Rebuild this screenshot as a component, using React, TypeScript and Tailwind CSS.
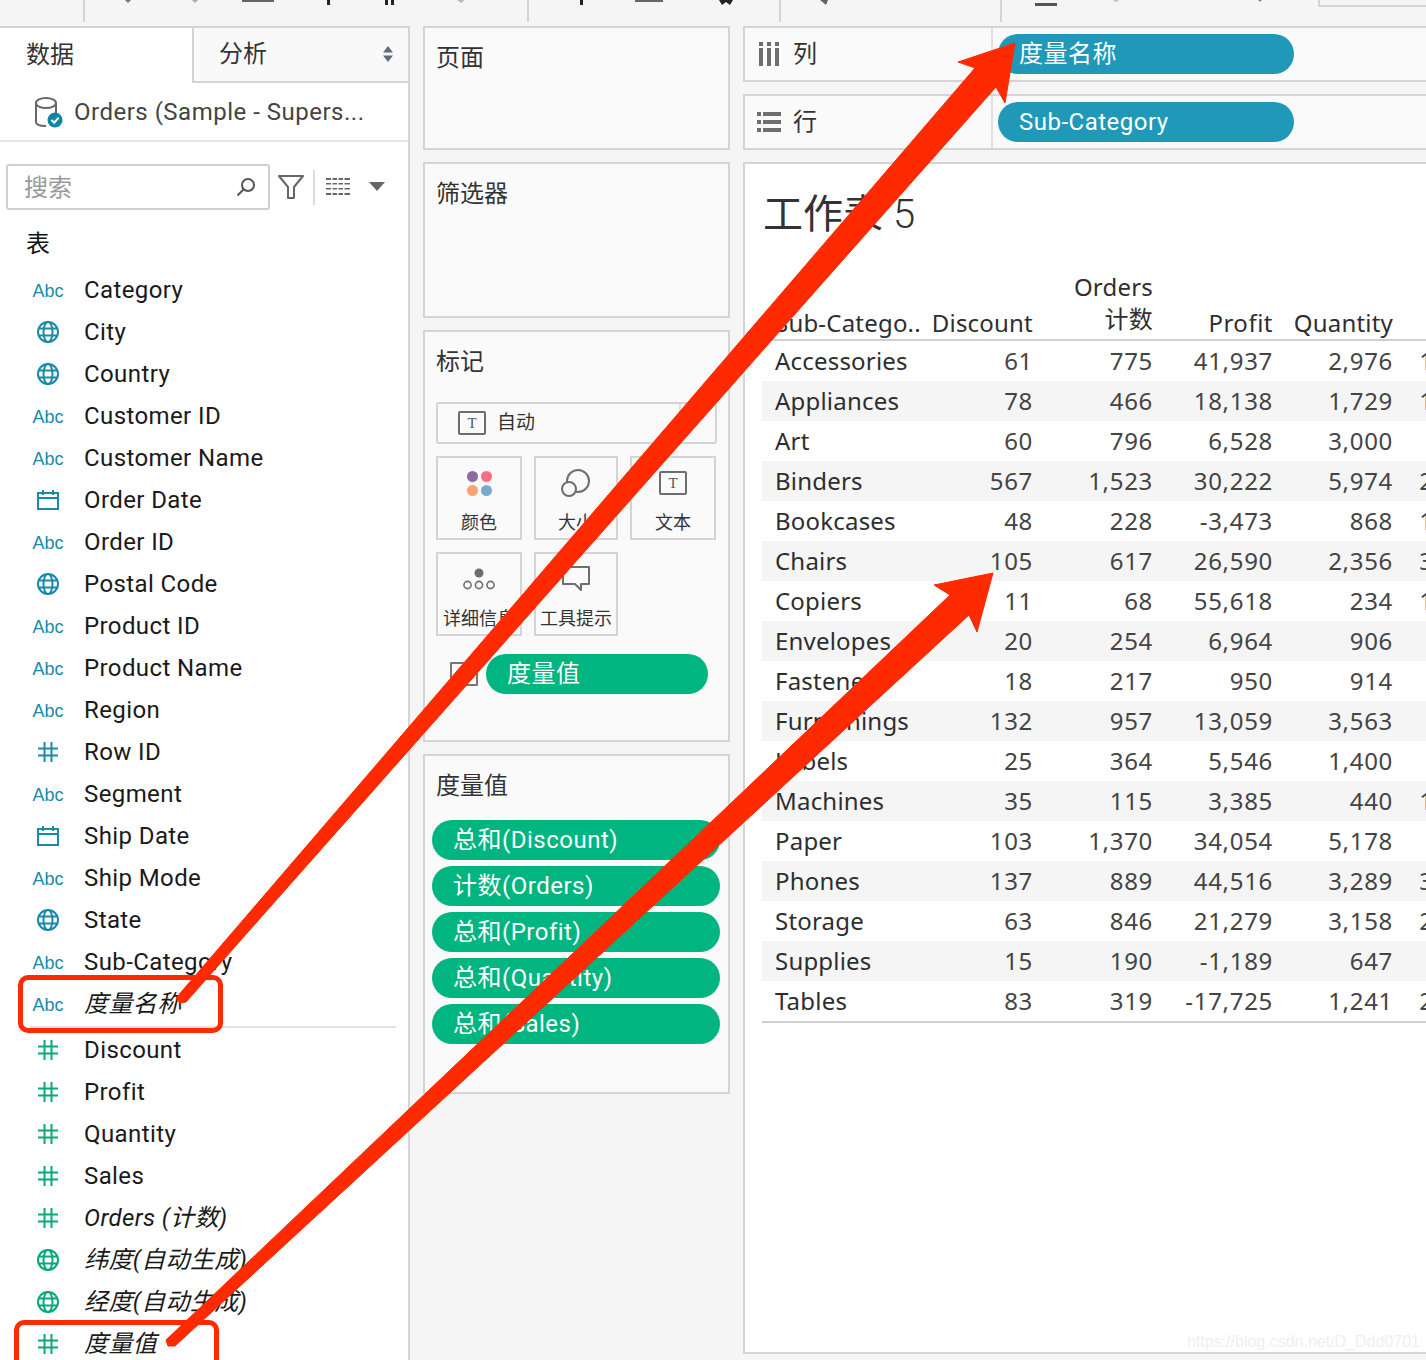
import React from "react";

const BLUE = "#1b89a9";
const GREEN = "#0aa77c";

function Hash({ color }: { color: string }) {
  return (
    <svg width="20" height="20" viewBox="0 0 20 20" fill="none" stroke={color} strokeWidth="2">
      <path d="M6.5 0v20M13.5 0v20M0 6.5h20M0 13.5h20" />
    </svg>
  );
}
function Globe({ color }: { color: string }) {
  return (
    <svg width="22" height="22" viewBox="0 0 22 22" fill="none" stroke={color} strokeWidth="2">
      <circle cx="11" cy="11" r="10" />
      <ellipse cx="11" cy="11" rx="4.5" ry="10" />
      <path d="M1.5 7.5h19M1.5 14.5h19" />
    </svg>
  );
}
function Cal({ color }: { color: string }) {
  return (
    <svg width="22" height="20" viewBox="0 0 22 20" fill="none" stroke={color} strokeWidth="2">
      <rect x="1" y="3" width="20" height="16" />
      <path d="M1 8h20M6 0v5M16 0v5" />
    </svg>
  );
}
type F = { n: string; t: "a" | "g" | "c" | "h"; i?: boolean; c?: string };
function FieldRow({ f, h }: { f: F; h: string }) {
  const c = f.c ?? BLUE;
  return (
    <div className={`flex items-center ${h}`}>
      <div className="w-[32px] ml-[32px] flex justify-center shrink-0">
        {f.t === "a" && <span className="mt-[3px] text-[18px] [font-family:'Liberation_Sans',sans-serif]" style={{ color: c }}>Abc</span>}
        {f.t === "g" && <Globe color={c} />}
        {f.t === "c" && <Cal color={c} />}
        {f.t === "h" && <Hash color={c} />}
      </div>
      <span className={`ml-[20px] text-[24px] tracking-[0.4px] text-[#1a1a1a] whitespace-nowrap ${f.i ? "italic" : ""}`}>{f.n}</span>
    </div>
  );
}

const dims: F[] = [
  { n: "Category", t: "a" }, { n: "City", t: "g" }, { n: "Country", t: "g" }, { n: "Customer ID", t: "a" },
  { n: "Customer Name", t: "a" }, { n: "Order Date", t: "c" }, { n: "Order ID", t: "a" }, { n: "Postal Code", t: "g" },
  { n: "Product ID", t: "a" }, { n: "Product Name", t: "a" }, { n: "Region", t: "a" }, { n: "Row ID", t: "h" },
  { n: "Segment", t: "a" }, { n: "Ship Date", t: "c" }, { n: "Ship Mode", t: "a" }, { n: "State", t: "g" },
  { n: "Sub-Category", t: "a" }, { n: "度量名称", t: "a", i: true },
];
const meas: F[] = [
  { n: "Discount", t: "h", c: GREEN }, { n: "Profit", t: "h", c: GREEN }, { n: "Quantity", t: "h", c: GREEN },
  { n: "Sales", t: "h", c: GREEN }, { n: "Orders (计数)", t: "h", c: GREEN, i: true },
  { n: "纬度(自动生成)", t: "g", c: GREEN, i: true }, { n: "经度(自动生成)", t: "g", c: GREEN, i: true },
  { n: "度量值", t: "h", c: GREEN, i: true },
];

const rows = [
  ["Accessories", "61", "775", "41,937", "2,976", "167,380"],
  ["Appliances", "78", "466", "18,138", "1,729", "107,532"],
  ["Art", "60", "796", "6,528", "3,000", "27,119"],
  ["Binders", "567", "1,523", "30,222", "5,974", "203,413"],
  ["Bookcases", "48", "228", "-3,473", "868", "114,880"],
  ["Chairs", "105", "617", "26,590", "2,356", "328,449"],
  ["Copiers", "11", "68", "55,618", "234", "149,528"],
  ["Envelopes", "20", "254", "6,964", "906", "16,476"],
  ["Fasteners", "18", "217", "950", "914", "3,024"],
  ["Furnishings", "132", "957", "13,059", "3,563", "91,705"],
  ["Labels", "25", "364", "5,546", "1,400", "12,486"],
  ["Machines", "35", "115", "3,385", "440", "189,239"],
  ["Paper", "103", "1,370", "34,054", "5,178", "78,479"],
  ["Phones", "137", "889", "44,516", "3,289", "330,007"],
  ["Storage", "63", "846", "21,279", "3,158", "223,844"],
  ["Supplies", "15", "190", "-1,189", "647", "46,674"],
  ["Tables", "83", "319", "-17,725", "1,241", "206,966"],
];

const COLS = "grid grid-cols-[151px_120px_120px_120px_120px_120px]";

function TIcon() {
  return (
    <div className="w-[28px] h-[24px] border-2 border-[#6e6e6e] rounded-[2px] flex items-center justify-center text-[15px] leading-none text-[#555] [font-family:'Liberation_Serif',serif]">T</div>
  );
}

function MarkBtn({ label, children }: { label: string; children: React.ReactNode }) {
  return (
    <div className="h-[84px] border-2 border-[#d4d4d4] flex flex-col items-center">
      <div className="h-[50px] flex items-center justify-center">{children}</div>
      <span className="pt-[2px] text-[18px] leading-[26px] text-[#333] whitespace-nowrap">{label}</span>
    </div>
  );
}

function Card({ className, title, children }: { className: string; title?: string; children?: React.ReactNode }) {
  return (
    <div className={`border-2 border-[#d4d4d4] bg-[#fafafa] ${className}`}>
      {title && <div className="pl-[11px] pt-[15px] text-[24px] leading-[30px] text-[#333]">{title}</div>}
      {children}
    </div>
  );
}

function Pill({ color, text, className }: { color: string; text: string; className: string }) {
  return (
    <div className={`h-[40px] rounded-full flex items-center pl-[21px] text-white text-[24px] tracking-[0.5px] whitespace-nowrap ${className}`} style={{ backgroundColor: color }}>{text}</div>
  );
}

function Shelf({ icon, label, pill }: { icon: React.ReactNode; label: string; pill: string }) {
  return (
    <div className="h-[56px] border-2 border-r-0 border-[#d4d4d4] bg-[#fafafa] flex">
      <div className="w-[248px] flex items-center border-r-2 border-[#e0e0e0]">
        <div className="w-[48px] flex justify-center">{icon}</div>
        <span className="text-[24px] text-[#333]">{label}</span>
      </div>
      <div className="pl-[5px] flex items-center">
        <Pill color="#2099b8" text={pill} className="w-[296px]" />
      </div>
    </div>
  );
}

export default function App() {
  return (
    <div className="relative w-[1426px] h-[1360px] overflow-hidden bg-[#f5f5f5] [font-family:Roboto,'Noto_Sans_CJK_SC',sans-serif]">
      {/* toolbar */}
      <div className="relative h-[26px]">
        <div className="flex h-[22px]">
          <div className="w-[85px] border-r-2 border-[#d4d4d4]" />
          <div className="w-[444px] border-r-2 border-[#d4d4d4]" />
          <div className="w-[252px] border-r-2 border-[#d4d4d4]" />
          <div className="w-[221px] border-r-2 border-[#d4d4d4]" />
        </div>
        <svg className="absolute left-0 top-0" width="1426" height="26">
          <g fill="#777">
            <path d="M125 0h6l-3 3z" /><path d="M192 0h6l-3 3z" fill="#aaa" />
            <rect x="242" y="0" width="32" height="2" fill="#666" />
            <rect x="327" y="0" width="3" height="5" fill="#222" />
            <rect x="385" y="0" width="3" height="5" fill="#222" /><rect x="391" y="0" width="3" height="5" fill="#222" />
            <path d="M457 0h8l-4 3z" fill="#bbb" />
            <rect x="580" y="0" width="3" height="5" fill="#222" />
            <rect x="635" y="0" width="28" height="2" fill="#666" />
            <path d="M719 0h14l-3 5-4-3-4 3z" fill="#222" />
            <path d="M820 0h8l-2 5z" fill="#666" />
            <rect x="1035" y="3" width="22" height="3" fill="#555" />
            <path d="M1113 0h6l-3 2z" fill="#bbb" /><path d="M1258 0h4l-2 2z" fill="#888" />
          </g>
          <path d="M1319 0v6h107" fill="none" stroke="#d4d4d4" strokeWidth="2" />
        </svg>
      </div>

      <div className="flex h-[1334px]">
        {/* left data pane */}
        <div className="w-[410px] shrink-0 bg-white border-t-2 border-r-2 border-[#d4d4d4] overflow-hidden">
          <div className="flex h-[55px]">
            <div className="w-[192px] pl-[26px] pb-[2px] flex items-center text-[24px] text-[#333]">数据</div>
            <div className="flex-1 bg-[#f9f9f9] border-l-2 border-b-2 border-[#d4d4d4] pl-[25px] pb-[2px] flex items-center justify-between pr-[14px] text-[24px] text-[#333]">
              <span>分析</span>
              <svg width="12" height="16" viewBox="0 0 12 16" fill="#5d6d7e"><path d="M6 0l5 6.5H1zM6 16l-5-6.5h10z" /></svg>
            </div>
          </div>
          <div className="h-[59px] border-b-2 border-[#e8e8e8] flex items-center pl-[34px]">
            <svg width="30" height="32" viewBox="0 0 30 32" fill="none" stroke="#666" strokeWidth="2">
              <ellipse cx="12" cy="7" rx="10" ry="5" />
              <path d="M2 7v19c0 2.5 4 4 10 4" /><path d="M22 7v12" />
              <circle cx="21" cy="24" r="7.5" fill="#0f86a8" stroke="none" />
              <path d="M17.5 24l2.7 2.7 4.5-5" stroke="#fff" strokeWidth="2" />
            </svg>
            <span className="ml-[10px] text-[24px] tracking-[0.5px] text-[#444] whitespace-nowrap">Orders (Sample - Supers...</span>
          </div>
          <div className="flex items-center pl-[6px] mt-[22px]">
            <div className="w-[264px] h-[46px] border-2 border-[#cfcfcf] rounded-[3px] flex items-center justify-between pl-[16px] pr-[12px] text-[24px] text-[#9a9a9a]">
              <span className="pt-[2px]">搜索</span>
              <svg width="20" height="20" viewBox="0 0 20 20" fill="none" stroke="#555" strokeWidth="2"><circle cx="12" cy="8" r="6" /><path d="M7.5 12.5L1.5 18.5" /></svg>
            </div>
            <svg className="ml-[8px]" width="26" height="26" viewBox="0 0 26 26" fill="none" stroke="#666" strokeWidth="2" strokeLinejoin="round"><path d="M1 2h24L16 13v11h-6V13z" /></svg>
            <div className="ml-[9px] w-[2px] h-[35px] bg-[#dcdcdc]" />
            <svg className="ml-[11px]" width="24" height="18" viewBox="0 0 24 18" fill="#666">
              <rect x="0" y="0" width="24" height="2" /><rect x="0" y="5" width="24" height="1.5" /><rect x="0" y="10" width="24" height="1.5" /><rect x="0" y="15" width="24" height="2" />
              <rect x="5" y="0" width="1.5" height="18" fill="#fff" /><rect x="11" y="0" width="1.5" height="18" fill="#fff" /><rect x="17" y="0" width="1.5" height="18" fill="#fff" />
            </svg>
            <svg className="ml-[19px]" width="16" height="10" viewBox="0 0 16 10" fill="#666"><path d="M0 0h16L8 9z" /></svg>
          </div>
          <div className="pl-[26px] mt-[16px] text-[24px] leading-[36px] text-[#111]">表</div>
          <div className="mt-[7px]">
            {dims.map((f) => <FieldRow key={f.n} f={f} h="h-[42px]" />)}
          </div>
          <div className="ml-[30px] mr-[12px] h-[2px] bg-[#e2e2e2] mt-[1px]" />
          <div className="mt-[1px]">
            {meas.map((f) => <FieldRow key={f.n} f={f} h="h-[42px]" />)}
          </div>
        </div>

        {/* middle */}
        <div className="w-[307px] shrink-0 ml-[13px] flex flex-col gap-[12px]">
          <Card className="h-[124px]" title="页面" />
          <Card className="h-[156px]" title="筛选器" />
          <Card className="h-[412px]" title="标记">
            <div className="mx-[11px] mt-[25px]">
              <div className="h-[42px] border-2 border-[#d4d4d4] rounded-[3px] flex items-center">
                <div className="ml-[20px]"><TIcon /></div>
                <span className="ml-[11px] text-[19px] text-[#333]">自动</span>
                <div className="ml-auto mr-[34px] w-[2px] h-full bg-[#e0e0e0]" />
              </div>
              <div className="grid grid-cols-[86px_84px_86px] gap-x-[12px] gap-y-[12px] mt-[12px]">
                <MarkBtn label="颜色">
                  <div className="grid grid-cols-[11px_11px] gap-[3px]">
                    <div className="w-[11px] h-[11px] rounded-full bg-[#8a6d9f]" />
                    <div className="w-[11px] h-[11px] rounded-full bg-[#fa6c86]" />
                    <div className="w-[11px] h-[11px] rounded-full bg-[#ffa273]" />
                    <div className="w-[11px] h-[11px] rounded-full bg-[#7ba8d3]" />
                  </div>
                </MarkBtn>
                <MarkBtn label="大小">
                  <svg width="30" height="28" viewBox="0 0 30 28" fill="none" stroke="#6e6e6e" strokeWidth="2"><circle cx="17" cy="12" r="11" /><circle cx="8" cy="20" r="7" fill="#fafafa" /></svg>
                </MarkBtn>
                <MarkBtn label="文本"><TIcon /></MarkBtn>
                <MarkBtn label="详细信息">
                  <svg width="32" height="22" viewBox="0 0 32 22" fill="none" stroke="#6e6e6e" strokeWidth="1.6">
                    <circle cx="16" cy="5" r="4.5" fill="#6e6e6e" stroke="none" />
                    <circle cx="4.5" cy="17" r="3.6" /><circle cx="16" cy="17" r="3.6" /><circle cx="27.5" cy="17" r="3.6" />
                  </svg>
                </MarkBtn>
                <MarkBtn label="工具提示">
                  <svg width="28" height="26" viewBox="0 0 28 26" fill="none" stroke="#6e6e6e" strokeWidth="2" strokeLinejoin="round"><path d="M1 1h26v17h-8v6l-6-6H1z" /></svg>
                </MarkBtn>
              </div>
              <div className="flex items-center mt-[18px] ml-[14px]">
                <div className="w-[28px] h-[24px] border-2 border-[#777] rounded-[1px]" />
                <Pill color="#00b57f" text="度量值" className="ml-[8px] w-[222px]" />
              </div>
            </div>
          </Card>
          <Card className="h-[340px]" title="度量值">
            <div className="mx-[7px] mt-[19px] flex flex-col gap-[6px]">
              {["总和(Discount)", "计数(Orders)", "总和(Profit)", "总和(Quantity)", "总和(Sales)"].map((t) => (
                <Pill key={t} color="#00b57f" text={t} className="w-[288px]" />
              ))}
            </div>
          </Card>
        </div>

        {/* right */}
        <div className="flex-1 min-w-0 ml-[13px] flex flex-col gap-[12px]">
          <Shelf
            label="列"
            pill="度量名称"
            icon={
              <svg width="22" height="24" viewBox="0 0 22 24" fill="#6e6e6e">
                <rect x="1" y="0" width="4" height="4" /><rect x="9" y="0" width="4" height="4" /><rect x="17" y="0" width="4" height="4" />
                <rect x="1" y="6" width="4" height="18" /><rect x="9" y="6" width="4" height="18" /><rect x="17" y="6" width="4" height="18" />
              </svg>
            }
          />
          <Shelf
            label="行"
            pill="Sub-Category"
            icon={
              <svg width="24" height="20" viewBox="0 0 24 20" fill="#6e6e6e">
                <rect x="0" y="0" width="4" height="4" /><rect x="6" y="0" width="18" height="4" />
                <rect x="0" y="8" width="4" height="4" /><rect x="6" y="8" width="18" height="4" />
                <rect x="0" y="16" width="4" height="4" /><rect x="6" y="16" width="18" height="4" />
              </svg>
            }
          />
          <div className="relative h-[1192px] border-2 border-r-0 border-[#d4d4d4] bg-white overflow-hidden">
            <div className="pl-[18px] pt-[23px] text-[40px] leading-[56px] text-[#333] whitespace-nowrap">工作表 <span className="font-light">5</span></div>
            <div className="ml-[17px] mt-[15px] w-[800px] text-[24px] tracking-[0.2px] text-[#2e2e2e] [font-family:'Noto_Sans','Noto_Sans_CJK_SC',sans-serif]">
              <div className={`${COLS} h-[83px] border-b-2 border-[#cfcfcf] leading-[32px] whitespace-nowrap`}>
                <div className="self-end pl-[13px]">Sub-Catego..</div>
                <div className="self-end text-right">Discount</div>
                <div className="self-end text-right pb-[4px]">Orders<br />计数</div>
                <div className="self-end text-right tracking-[0.5px]">Profit</div>
                <div className="self-end text-right">Quantity</div>
                <div className="self-end text-right" />
              </div>
              {rows.map((r, i) => (
                <div key={r[0]} className={`${COLS} h-[40px] items-center leading-[40px] ${i % 2 ? "bg-[#f5f5f5]" : ""}`}>
                  <div className="pl-[13px]">{r[0]}</div>
                  {r.slice(1).map((v, j) => <div key={j} className="text-right tracking-[0.7px] text-[#444]">{v}</div>)}
                </div>
              ))}
              <div className="h-[2px] bg-[#cfcfcf]" />
            </div>
            <div className="absolute right-[6px] bottom-0 text-[16px] leading-[20px] text-[#efefef] [font-family:'Liberation_Sans',sans-serif]">https://blog.csdn.net/D_Ddd0701</div>
          </div>
        </div>
      </div>

      {/* red annotation overlay */}
      <div className="absolute left-[18px] top-[975px] w-[205px] h-[58px] border-[5px] border-[#ff2a00] rounded-[10px]" />
      <div className="absolute left-[14px] top-[1320px] w-[205px] h-[58px] border-[5px] border-[#ff2a00] rounded-[10px]" />
      <svg className="absolute left-0 top-0 pointer-events-none" width="1426" height="1360" fill="#ff2a00" stroke="#ff2a00" strokeLinejoin="round">
        <polygon strokeWidth="1" points="176,998 975,68 958,62 1015,43 1005,103 996,87 186,1002 180,1003" />
        <polygon strokeWidth="1" points="166,1340 950,595 934,585 993,573 977,632 969,615 175,1346 168,1346" />
      </svg>
    </div>
  );
}
